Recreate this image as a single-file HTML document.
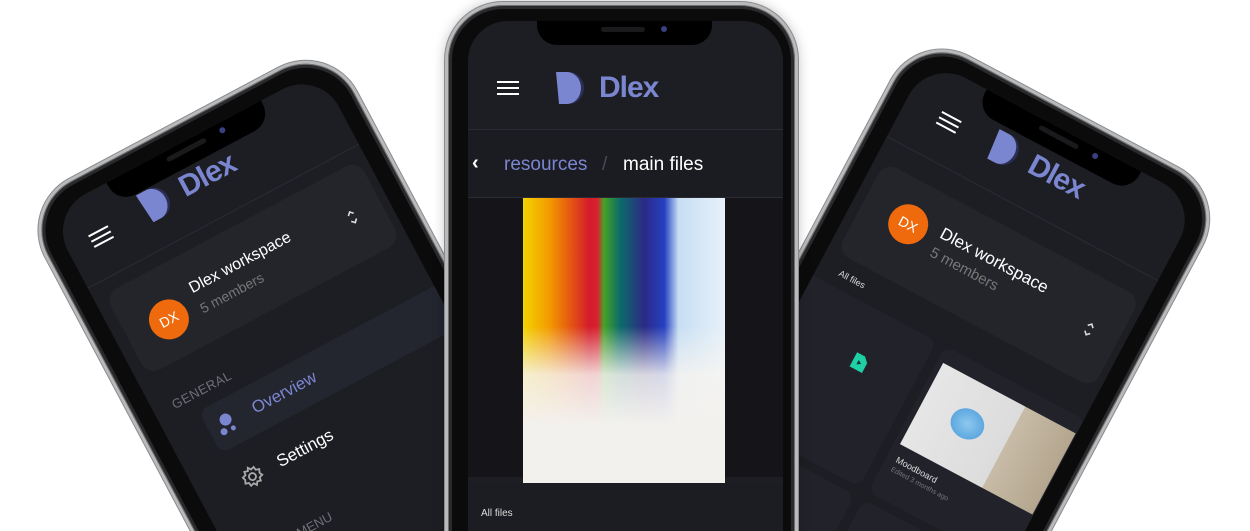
<!DOCTYPE html>
<html><head><meta charset="utf-8">
<style>
*{margin:0;padding:0;box-sizing:border-box}
html,body{width:1250px;height:531px;overflow:hidden}
body{background:#fff;position:relative;font-family:"Liberation Sans",sans-serif}
.phone{position:absolute;width:353px;height:760px;border-radius:58px;background:#0b0b0c;border:3px solid #b9babc;box-shadow:0 0 0 1px #6d6e70 inset,0 0 0 4px #2a2a2c inset,0 0 0 1px #8a8b8d;}
.screen{position:absolute;left:20px;top:18px;width:307px;height:718px;border-radius:42px;background:#1d1e23;overflow:hidden}
.notch{position:absolute;left:66px;top:0;width:175px;height:24px;background:#000;border-radius:0 0 20px 20px}
.notch .sp{position:absolute;left:64px;top:6px;width:44px;height:5px;border-radius:3px;background:#1a1a1c}
.notch .dot{position:absolute;left:124px;top:5px;width:6px;height:6px;border-radius:50%;background:#3a4080}
.ham{position:absolute;width:22px;height:14px;border-top:2.5px solid #fff;border-bottom:2.5px solid #fff}
.ham:after{content:"";position:absolute;left:0;right:0;top:3.5px;border-top:2.5px solid #fff}
.logo{position:absolute;display:flex;align-items:center;color:#7b86d0;font-weight:bold;font-size:30px;letter-spacing:-1px}
.logo svg{margin-right:7px}
.abs{position:absolute}
.av{position:absolute;width:40px;height:40px;border-radius:50%;background:#ee6a0c;color:#fff;font-size:14px;display:flex;align-items:center;justify-content:center}
.t1{color:#fff;font-size:16px}
.t2{color:#777;font-size:14px}
</style></head><body>

<!-- LEFT PHONE -->
<div class="phone" style="left:18px;top:206px;transform-origin:0 0;transform:rotate(-28deg)">
 <div class="screen">
  <div class="notch"><div class="sp"></div><div class="dot"></div></div>
  <div class="ham" style="left:25px;top:38px"></div>
  <div class="logo" style="left:86px;top:24px"><svg width="36" height="32" viewBox="0 0 36 32"><path d="M7 0h6a15 16 0 0 1 0 32H9z" fill="#2c2f55"/><path d="M0 0h11a14 16 0 0 1 0 32H3z" fill="#7b86d0"/></svg>Dlex</div>
  <div class="abs" style="left:0;right:0;top:84px;border-top:1px solid #2b2c33"></div>
  <div class="abs" style="left:12px;top:98px;width:287px;height:92px;border-radius:14px;background:#24252b"></div>
  <div class="av" style="left:37px;top:130px">DX</div>
  <div class="abs t1" style="left:90px;top:125px">Dlex workspace</div>
  <div class="abs t2" style="left:90px;top:148px">5 members</div>
  <svg class="abs" style="left:262px;top:138px" width="10" height="16" viewBox="0 0 10 16" fill="none" stroke="#ddd" stroke-width="1.6"><path d="M2 5l3-3 3 3M2 11l3 3 3-3"/></svg>
  <div class="abs" style="left:20px;top:220px;color:#6f7078;font-size:13px;letter-spacing:.5px">GENERAL</div>
  <div class="abs" style="left:40px;top:245px;width:290px;height:48px;border-radius:10px;background:#23252f"></div>
  <svg class="abs" style="left:48px;top:258px" width="22" height="22" viewBox="0 0 22 22"><circle cx="12" cy="7" r="6" fill="#7b86d0"/><circle cx="5" cy="17" r="3.5" fill="#7b86d0"/><circle cx="15" cy="18" r="2.5" fill="#7b86d0"/></svg>
  <div class="abs" style="left:89px;top:259px;color:#7b86d0;font-size:17px">Overview</div>
  <svg class="abs" style="left:45px;top:316px" width="24" height="24" viewBox="0 0 24 24" fill="none" stroke="#aaa" stroke-width="1.8"><circle cx="12" cy="12" r="3.5"/><path d="M12 2l2 3 3.5-1 .5 3.5 3.5 1-1.5 3.5 1.5 3-3.5 1-.5 3.5-3.5-1-2 3-2-3-3.5 1-.5-3.5-3.5-1 1.5-3.5L3 8.5l3.5-1L7 4l3.5 1z"/></svg>
  <div class="abs t1" style="left:86px;top:318px;font-size:17px">Settings</div>
  <div class="abs" style="left:70px;top:392px;color:#6f7078;font-size:13px">MENU</div>
 </div>
</div>

<!-- RIGHT PHONE -->
<div class="phone" style="left:918px;top:29px;transform-origin:0 0;transform:rotate(28deg)">
 <div class="screen">
  <div class="notch"><div class="sp"></div><div class="dot"></div></div>
  <div class="ham" style="left:37px;top:40px"></div>
  <div class="logo" style="left:96px;top:28px"><svg width="36" height="32" viewBox="0 0 36 32"><path d="M7 0h6a15 16 0 0 1 0 32H9z" fill="#2c2f55"/><path d="M0 0h11a14 16 0 0 1 0 32H3z" fill="#7b86d0"/></svg>Dlex</div>
  <div class="abs" style="left:0;right:0;top:88px;border-top:1px solid #2b2c33"></div>
  <div class="abs" style="left:10px;top:112px;width:290px;height:102px;border-radius:14px;background:#24252b"></div>
  <div class="av" style="left:40px;top:136px">DX</div>
  <div class="abs t1" style="left:93px;top:138px;font-size:17px">Dlex workspace</div>
  <div class="abs t2" style="left:93px;top:161px;font-size:15px">5 members</div>
  <svg class="abs" style="left:264px;top:156px" width="10" height="16" viewBox="0 0 10 16" fill="none" stroke="#ddd" stroke-width="1.6"><path d="M2 5l3-3 3 3M2 11l3 3 3-3"/></svg>
  <div class="abs" style="left:22px;top:226px;color:#ddd;font-size:9px">All files</div>
  <div class="abs" style="left:-10px;top:246px;width:150px;height:165px;border-radius:10px;background:#22232a"></div>
  <svg class="abs" style="left:74px;top:292px" width="16" height="18" viewBox="0 0 16 18"><path d="M1 1h9l5 5v11H1z" fill="#1fcfa6"/><path d="M6 7l4 2.5L6 12z" fill="#14333a"/></svg>
  <div class="abs" style="left:150px;top:246px;width:160px;height:165px;border-radius:10px;background:#22232a"></div>
  <div class="abs" style="left:156px;top:262px;width:150px;height:92px;background:linear-gradient(90deg,#e6e6e6 0,#dcdcdc 62%,#c8bca8 62%,#b4a68e 100%)">
   <div class="abs" style="left:30px;top:25px;width:40px;height:35px;border-radius:50%;background:radial-gradient(#8ec8ee,#5ea8e0 60%,transparent 62%)"></div>
  </div>
  <div class="abs" style="left:160px;top:364px;color:#ddd;font-size:9px">Moodboard</div>
  <div class="abs" style="left:160px;top:377px;color:#777;font-size:7px">Edited 3 months ago</div>
  <div class="abs" style="left:-10px;top:420px;width:150px;height:165px;border-radius:10px;background:#22232a"></div>
  <div class="abs" style="left:150px;top:420px;width:160px;height:165px;border-radius:10px;background:#22232a"></div>
 </div>
</div>

<!-- CENTER PHONE -->
<div class="phone" style="left:445px;top:2px;box-shadow:0 0 0 1px #6d6e70 inset,0 0 0 4px #2a2a2c inset,0 0 0 1px #8a8b8d,0 0 12px rgba(0,0,0,.25)">
 <div class="screen" style="left:20px;top:16px;width:315px;height:728px;border-radius:40px">
  <div class="notch" style="left:69px"><div class="sp"></div><div class="dot"></div></div>
  <div class="ham" style="left:29px;top:60px"></div>
  <div class="logo" style="left:88px;top:50px"><svg width="36" height="32" viewBox="0 0 36 32"><path d="M7 0h6a15 16 0 0 1 0 32H9z" fill="#2c2f55"/><path d="M0 0h11a14 16 0 0 1 0 32H3z" fill="#7b86d0"/></svg>Dlex</div>
  <div class="abs" style="left:0;right:0;top:108px;border-top:1px solid #2b2c33"></div>
  <div class="abs" style="left:0;right:0;top:109px;height:67px;background:#1b1c21"></div>
  <div class="abs" style="left:4px;top:131px;color:#fff;font-size:20px;font-weight:bold">‹</div>
  <div class="abs" style="left:36px;top:133px;color:#7b86d0;font-size:19px">resources</div>
  <div class="abs" style="left:134px;top:133px;color:#4a4b52;font-size:19px">/</div>
  <div class="abs" style="left:155px;top:133px;color:#fff;font-size:19px">main files</div>
  <div class="abs" style="left:0;right:0;top:176px;height:280px;background:#141419;border-top:1px solid #2b2c33"></div>
  <div class="abs" style="left:55px;top:177px;width:202px;height:285px;background:linear-gradient(180deg,rgba(246,244,240,0) 0%,rgba(246,244,240,0) 45%,rgba(246,244,240,.85) 62%,#f3f1ee 80%),linear-gradient(90deg,#f3d400 0%,#f39a00 13%,#e55a10 23%,#d41a2c 33%,#d8232e 37%,#46a325 40%,#0c6c68 48%,#2b2a86 60%,#2540c2 70%,#c7def3 77%,#e7f1fa 100%)"></div>
  <div class="abs" style="left:0;right:0;top:462px;height:300px;background:#1c1d22"></div>
  <div class="abs" style="left:13px;top:487px;color:#ddd;font-size:10px">All files</div>
  <div class="abs" style="left:10px;top:510px;width:100px;height:40px;border-radius:8px;background:#24252b"></div>
  <div class="abs" style="left:28px;top:512px;width:70px;height:6px;background:linear-gradient(90deg,#f3d400,#e55a10,#d41a2c,#46a325,#2b2a86,#2540c2,#e7f1fa)"></div>
 </div>
</div>

</body></html>
